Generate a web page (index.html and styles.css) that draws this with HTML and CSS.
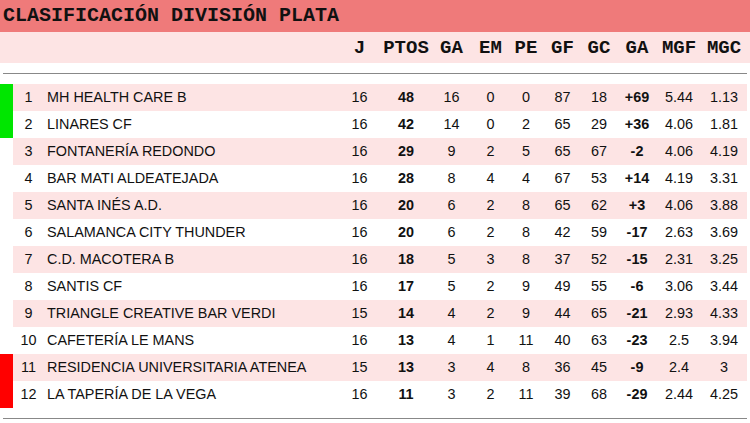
FILE: index.html
```html
<!DOCTYPE html>
<html lang="es">
<head>
<meta charset="utf-8">
<title>Clasificación División Plata</title>
<link rel="stylesheet" href="styles.css">
</head>
<body>
<div class="title">CLASIFICACIÓN DIVISIÓN PLATA</div>
<div class="head cols">
  <span></span><span></span><span></span>
  <span>J</span><span>PTOS</span><span>GA</span><span>EM</span><span>PE</span><span>GF</span><span>GC</span><span>GA</span><span>MGF</span><span>MGC</span><span></span>
</div>
<div class="rule"></div>
<div class="rows">
  <div class="row odd"><span class="bar up"></span><span class="pos">1</span><span class="name">MH HEALTH CARE B</span><span>16</span><span class="b">48</span><span>16</span><span>0</span><span>0</span><span>87</span><span>18</span><span class="b">+69</span><span>5.44</span><span>1.13</span></div>
  <div class="row"><span class="bar up"></span><span class="pos">2</span><span class="name">LINARES CF</span><span>16</span><span class="b">42</span><span>14</span><span>0</span><span>2</span><span>65</span><span>29</span><span class="b">+36</span><span>4.06</span><span>1.81</span></div>
  <div class="row odd"><span class="bar"></span><span class="pos">3</span><span class="name">FONTANERÍA REDONDO</span><span>16</span><span class="b">29</span><span>9</span><span>2</span><span>5</span><span>65</span><span>67</span><span class="b">-2</span><span>4.06</span><span>4.19</span></div>
  <div class="row"><span class="bar"></span><span class="pos">4</span><span class="name">BAR MATI ALDEATEJADA</span><span>16</span><span class="b">28</span><span>8</span><span>4</span><span>4</span><span>67</span><span>53</span><span class="b">+14</span><span>4.19</span><span>3.31</span></div>
  <div class="row odd"><span class="bar"></span><span class="pos">5</span><span class="name">SANTA INÉS A.D.</span><span>16</span><span class="b">20</span><span>6</span><span>2</span><span>8</span><span>65</span><span>62</span><span class="b">+3</span><span>4.06</span><span>3.88</span></div>
  <div class="row"><span class="bar"></span><span class="pos">6</span><span class="name">SALAMANCA CITY THUNDER</span><span>16</span><span class="b">20</span><span>6</span><span>2</span><span>8</span><span>42</span><span>59</span><span class="b">-17</span><span>2.63</span><span>3.69</span></div>
  <div class="row odd"><span class="bar"></span><span class="pos">7</span><span class="name">C.D. MACOTERA B</span><span>16</span><span class="b">18</span><span>5</span><span>3</span><span>8</span><span>37</span><span>52</span><span class="b">-15</span><span>2.31</span><span>3.25</span></div>
  <div class="row"><span class="bar"></span><span class="pos">8</span><span class="name">SANTIS CF</span><span>16</span><span class="b">17</span><span>5</span><span>2</span><span>9</span><span>49</span><span>55</span><span class="b">-6</span><span>3.06</span><span>3.44</span></div>
  <div class="row odd"><span class="bar"></span><span class="pos">9</span><span class="name">TRIANGLE CREATIVE BAR VERDI</span><span>15</span><span class="b">14</span><span>4</span><span>2</span><span>9</span><span>44</span><span>65</span><span class="b">-21</span><span>2.93</span><span>4.33</span></div>
  <div class="row"><span class="bar"></span><span class="pos">10</span><span class="name">CAFETERÍA LE MANS</span><span>16</span><span class="b">13</span><span>4</span><span>1</span><span>11</span><span>40</span><span>63</span><span class="b">-23</span><span>2.5</span><span>3.94</span></div>
  <div class="row odd"><span class="bar down"></span><span class="pos">11</span><span class="name">RESIDENCIA UNIVERSITARIA ATENEA</span><span>15</span><span class="b">13</span><span>3</span><span>4</span><span>8</span><span>36</span><span>45</span><span class="b">-9</span><span>2.4</span><span>3</span></div>
  <div class="row"><span class="bar down"></span><span class="pos">12</span><span class="name">LA TAPERÍA DE LA VEGA</span><span>16</span><span class="b">11</span><span>3</span><span>2</span><span>11</span><span>39</span><span>68</span><span class="b">-29</span><span>2.44</span><span>4.25</span></div>
</div>
<div class="rule"></div>
</body>
</html>
```
FILE: styles.css
```css
html, body {
  margin: 0;
  padding: 0;
  background: #fff;
}
body {
  width: 750px;
  overflow: hidden;
}
.title {
  height: 32px;
  line-height: 32px;
  background: #ef7a7a;
  color: #111;
  font-family: "Liberation Mono", "Courier New", monospace;
  font-weight: bold;
  font-size: 20px;
  padding-left: 3px;
  white-space: nowrap;
}
.cols, .row {
  display: grid;
  grid-template-columns: 13px 31px 293px 45px 48px 43px 35px 36px 37px 36px 40px 44px 46px 3px;
  align-items: center;
}
.head {
  height: 31px;
  background: #fde4e4;
  font-family: "Liberation Mono", "Courier New", monospace;
  font-weight: bold;
  font-size: 19px;
  color: #111;
  text-align: center;
}
.rule {
  height: 1px;
  background: #888;
  margin: 10px 3px;
}
.row {
  height: 27px;
  font-family: "Liberation Sans", Arial, sans-serif;
  font-size: 14.4px;
  color: #111;
  text-align: center;
  background: linear-gradient(#fff, #fff) no-repeat;
}
.row.odd {
  background: linear-gradient(#fde4e4, #fde4e4) 13px 0 / 734px 100% no-repeat;
}
.row > span {
  line-height: 27px;
  white-space: nowrap;
}
.bar {
  height: 27px;
}
.bar.up { background: #00e600; }
.bar.down { background: #f00; }
.pos { text-align: center; }
.name {
  text-align: left;
  padding-left: 3px;
}
.b { font-weight: bold; }
```
